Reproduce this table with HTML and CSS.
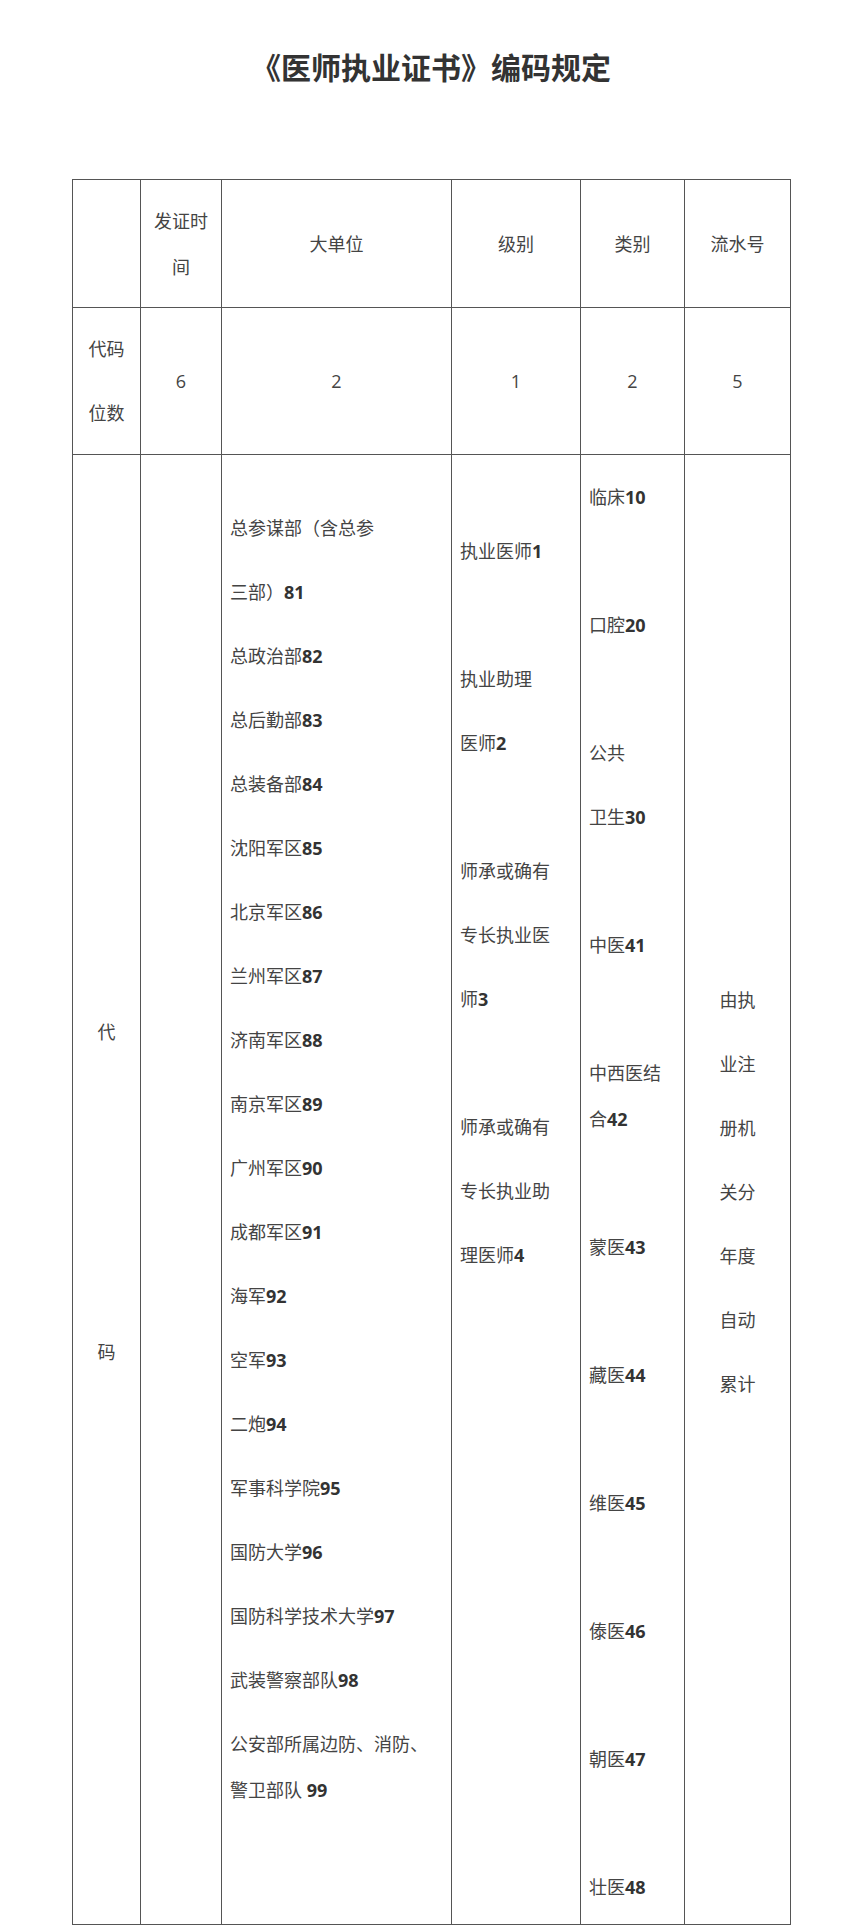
FILE: index.html
```html
<!DOCTYPE html>
<html lang="zh-CN">
<head>
<meta charset="utf-8">
<title>《医师执业证书》编码规定</title>
<link rel="stylesheet" href="styles.css">
</head>
<body>
<div class="page">
  <div class="doc">
    <h1 class="title">《医师执业证书》编码规定</h1>
    <table class="code-table">
      <colgroup>
        <col class="w-label">
        <col class="w-time">
        <col class="w-unit">
        <col class="w-level">
        <col class="w-type">
        <col class="w-serial">
      </colgroup>
      <tr class="r-head">
        <td></td>
        <td class="c"><p>发证时<br>间</p></td>
        <td class="c"><p>大单位</p></td>
        <td class="c"><p>级别</p></td>
        <td class="c"><p>类别</p></td>
        <td class="c"><p>流水号</p></td>
      </tr>
      <tr class="r-digits">
        <td class="c"><p>代码</p><p>位数</p></td>
        <td class="c"><p>6</p></td>
        <td class="c"><p>2</p></td>
        <td class="c"><p>1</p></td>
        <td class="c"><p>2</p></td>
        <td class="c"><p>5</p></td>
      </tr>
      <tr class="r-codes">
        <td class="c mid">
          <p>代</p><p class="blank"></p><p class="blank"></p><p class="blank"></p><p class="blank"></p><p>码</p>
        </td>
        <td></td>
        <td class="top unit">
          <p>总参谋部（含总参</p>
          <p>三部）<b>81</b></p>
          <p>总政治部<b>82</b></p>
          <p>总后勤部<b>83</b></p>
          <p>总装备部<b>84</b></p>
          <p>沈阳军区<b>85</b></p>
          <p>北京军区<b>86</b></p>
          <p>兰州军区<b>87</b></p>
          <p>济南军区<b>88</b></p>
          <p>南京军区<b>89</b></p>
          <p>广州军区<b>90</b></p>
          <p>成都军区<b>91</b></p>
          <p>海军<b>92</b></p>
          <p>空军<b>93</b></p>
          <p>二炮<b>94</b></p>
          <p>军事科学院<b>95</b></p>
          <p>国防大学<b>96</b></p>
          <p>国防科学技术大学<b>97</b></p>
          <p>武装警察部队<b>98</b></p>
          <p class="wrap">公安部所属边防、消防、<br>警卫部队 <b>99</b></p>
        </td>
        <td class="top level">
          <p>执业医师<b>1</b></p>
          <p class="blank"></p>
          <p>执业助理</p>
          <p>医师<b>2</b></p>
          <p class="blank"></p>
          <p>师承或确有</p>
          <p>专长执业医</p>
          <p>师<b>3</b></p>
          <p class="blank"></p>
          <p>师承或确有</p>
          <p>专长执业助</p>
          <p>理医师<b>4</b></p>
        </td>
        <td class="top type">
          <p>临床<b>10</b></p>
          <p class="blank"></p>
          <p>口腔<b>20</b></p>
          <p class="blank"></p>
          <p>公共</p>
          <p>卫生<b>30</b></p>
          <p class="blank"></p>
          <p>中医<b>41</b></p>
          <p class="blank"></p>
          <p class="wrap">中西医结<br>合<b>42</b></p>
          <p class="blank"></p>
          <p>蒙医<b>43</b></p>
          <p class="blank"></p>
          <p>藏医<b>44</b></p>
          <p class="blank"></p>
          <p>维医<b>45</b></p>
          <p class="blank"></p>
          <p>傣医<b>46</b></p>
          <p class="blank"></p>
          <p>朝医<b>47</b></p>
          <p class="blank"></p>
          <p>壮医<b>48</b></p>
        </td>
        <td class="c mid">
          <p>由执</p>
          <p>业注</p>
          <p>册机</p>
          <p>关分</p>
          <p>年度</p>
          <p>自动</p>
          <p>累计</p>
        </td>
      </tr>
    </table>
  </div>
</div>
</body>
</html>
```

FILE: styles.css
```css
html, body {
  margin: 0;
  padding: 0;
  background: #ffffff;
}

body {
  font-family: "Open Sans", "Noto Sans CJK SC", sans-serif;
  color: #444444;
}

.page {
  padding: 46px 0 0 72px;
}

.doc {
  width: 718px;
}

.title {
  margin: 0 0 93px;
  font-family: "Noto Sans CJK SC", sans-serif;
  font-size: 30px;
  line-height: 40px;
  font-weight: 700;
  color: #333333;
  text-align: center;
}

.code-table {
  width: 718px;
  border-collapse: collapse;
  table-layout: fixed;
}

.w-label { width: 68px; }
.w-time { width: 81px; }
.w-unit { width: 230px; }
.w-level { width: 129px; }
.w-type { width: 104px; }
.w-serial { width: 106px; }

.code-table td {
  border: 1px solid #555555;
  padding: 0 8px;
  vertical-align: middle;
  font-size: 18px;
  color: #444444;
}

.code-table p {
  margin: 0;
  padding: 9px 0;
  line-height: 46px;
  white-space: nowrap;
}

.code-table p.blank {
  height: 46px;
}

.code-table b {
  font-weight: 700;
  color: #333333;
}

.r-head { height: 128px; }
.r-digits { height: 147px; }
.r-codes { height: 1470px; }

.code-table td.c { text-align: center; }
.code-table td.mid { vertical-align: middle; padding-top: 4px; }
.code-table td.top { vertical-align: top; }
.code-table td.unit { padding-top: 41px; }
.code-table td.level { padding-top: 64px; }
.code-table td.type { padding-top: 10px; }
```
